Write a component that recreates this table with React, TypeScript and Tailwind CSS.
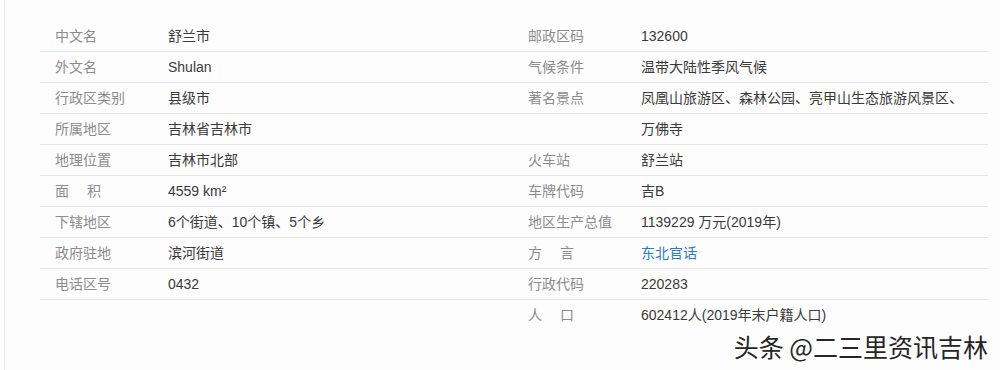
type Row = { label: string; value: string; link?: boolean; noLine?: boolean };

const leftRows: Row[] = [
  { label: '中文名', value: '舒兰市' },
  { label: '外文名', value: 'Shulan' },
  { label: '行政区类别', value: '县级市' },
  { label: '所属地区', value: '吉林省吉林市' },
  { label: '地理位置', value: '吉林市北部' },
  { label: '面　 积', value: '4559 km²' },
  { label: '下辖地区', value: '6个街道、10个镇、5个乡' },
  { label: '政府驻地', value: '滨河街道' },
  { label: '电话区号', value: '0432' },
];

const rightRows: Row[] = [
  { label: '邮政区码', value: '132600' },
  { label: '气候条件', value: '温带大陆性季风气候' },
  { label: '著名景点', value: '凤凰山旅游区、森林公园、亮甲山生态旅游风景区、' },
  { label: '', value: '万佛寺' },
  { label: '火车站', value: '舒兰站' },
  { label: '车牌代码', value: '吉B' },
  { label: '地区生产总值', value: '1139229 万元(2019年)' },
  { label: '方　 言', value: '东北官话', link: true },
  { label: '行政代码', value: '220283' },
  { label: '人　 口', value: '602412人(2019年末户籍人口)', noLine: true },
];

function InfoRow({ row }: { row: Row }) {
  return (
    <div
      className={`flex h-[31px] items-center pl-[15px] text-[14px] ${
        row.noLine ? '' : 'border-b border-[#e6e6e6]'
      }`}
    >
      <div className="w-[113px] shrink-0 whitespace-pre text-[#8c8c8c]">{row.label}</div>
      <div className={`whitespace-nowrap ${row.link ? 'text-[#2d7bc8]' : 'text-[#3a3a3a]'}`}>
        {row.value}
      </div>
    </div>
  );
}

export default function App() {
  return (
    <div
      className="relative h-[370px] w-[1000px] overflow-hidden bg-[#fdfdfd]"
      style={{ fontFamily: '"Liberation Sans", "Noto Sans CJK SC", sans-serif' }}
    >
      <div className="flex h-full">
        <div className="ml-[4px] w-px bg-[#ebebeb]" />
        <div className="ml-[35px] mt-[21px] grid w-[948px] grid-cols-[473px_475px] items-start">
          <div>
            {leftRows.map((r, i) => (
              <InfoRow key={i} row={r} />
            ))}
          </div>
          <div>
            {rightRows.map((r, i) => (
              <InfoRow key={i} row={r} />
            ))}
          </div>
        </div>
      </div>

      {/* 水印 */}
      <div
        className="absolute bottom-[11px] right-[12px] text-[25px] leading-none text-[#262626]"
        style={{ fontFamily: '"Noto Sans CJK SC", sans-serif', textShadow: '1px 1px 0 #fff, -1px -1px 0 #fff' }}
      >
        头条 @二三里资讯吉林
      </div>
    </div>
  );
}
